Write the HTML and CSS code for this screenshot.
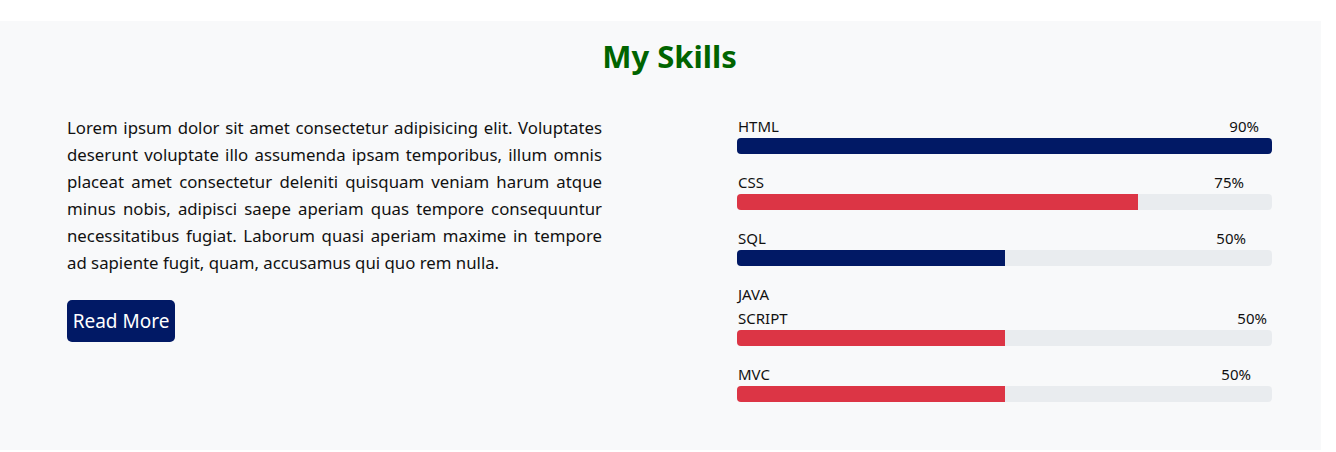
FILE: index.html
```html
<!DOCTYPE html>
<html lang="en">
<head>
<meta charset="utf-8">
<title>My Skills</title>
<link rel="stylesheet" href="styles.css">
</head>
<body>
<section class="skills">
  <h2 class="skills-title">My Skills</h2>
  <div class="skills-grid">
    <div class="about">
      <p class="about-text">Lorem ipsum dolor sit amet consectetur adipisicing elit. Voluptates deserunt voluptate illo assumenda ipsam temporibus, illum omnis placeat amet consectetur deleniti quisquam veniam harum atque minus nobis, adipisci saepe aperiam quas tempore consequuntur necessitatibus fugiat. Laborum quasi aperiam maxime in tempore ad sapiente fugit, quam, accusamus qui quo rem nulla.</p>
      <a class="btn-more" href="#">Read More</a>
    </div>
    <div class="bars">
      <div class="skill">
        <div class="skill-head"><span class="skill-name">HTML</span><span class="skill-pct pr-13">90%</span></div>
        <div class="track"><div class="fill navy" style="width:100%"></div></div>
      </div>
      <div class="skill">
        <div class="skill-head"><span class="skill-name">CSS</span><span class="skill-pct pr-28">75%</span></div>
        <div class="track"><div class="fill red" style="width:75%"></div></div>
      </div>
      <div class="skill">
        <div class="skill-head"><span class="skill-name">SQL</span><span class="skill-pct pr-26">50%</span></div>
        <div class="track"><div class="fill navy" style="width:50%"></div></div>
      </div>
      <div class="skill">
        <div class="skill-head"><span class="skill-name narrow">JAVA SCRIPT</span><span class="skill-pct pr-5">50%</span></div>
        <div class="track"><div class="fill red" style="width:50%"></div></div>
      </div>
      <div class="skill">
        <div class="skill-head"><span class="skill-name">MVC</span><span class="skill-pct pr-21">50%</span></div>
        <div class="track"><div class="fill red" style="width:50%"></div></div>
      </div>
    </div>
  </div>
</section>
</body>
</html>
```
FILE: styles.css
```css
* { box-sizing: border-box; }
html, body { margin: 0; padding: 0; background: #ffffff; }
body {
  font-family: "Noto Sans", "Open Sans", sans-serif;
  color: #212529;
}
.skills {
  margin: 21px 15px 0 0;
  min-height: 429px;
  background: #f8f9fa;
  padding: 17px 49px 0 67px;
}
.skills-title {
  margin: 0 0 39px;
  text-align: center;
  font-size: 31px;
  line-height: 1.2;
  font-weight: 700;
  color: #006400;
}
.skills-grid {
  display: grid;
  grid-template-columns: 1fr 1fr;
  column-gap: 135px;
}
.about-text {
  margin: 0 0 24px;
  font-size: 16.8px;
  line-height: 27px;
  text-align: justify;
  color: #111;
}
.btn-more {
  display: inline-flex;
  align-items: center;
  justify-content: center;
  width: 108px;
  height: 42px;
  background: #011965;
  color: #fff;
  font-size: 19px;
  text-decoration: none;
  border-radius: 5px;
}
.skill { margin-bottom: 16px; }
.skill-head {
  display: flex;
  justify-content: space-between;
  align-items: flex-end;
  font-size: 15px;
  line-height: 24px;
  color: #111;
  padding-left: 1px;
}
.skill-name.narrow { width: 60px; }
.pr-13 { padding-right: 13px; }
.pr-28 { padding-right: 28px; }
.pr-26 { padding-right: 26px; }
.pr-5 { padding-right: 5px; }
.pr-21 { padding-right: 21px; }
.track {
  height: 16px;
  background: #e9ecef;
  border-radius: 4px;
  overflow: hidden;
}
.fill { height: 100%; }
.navy { background: #011965; }
.red { background: #dc3545; }
```
